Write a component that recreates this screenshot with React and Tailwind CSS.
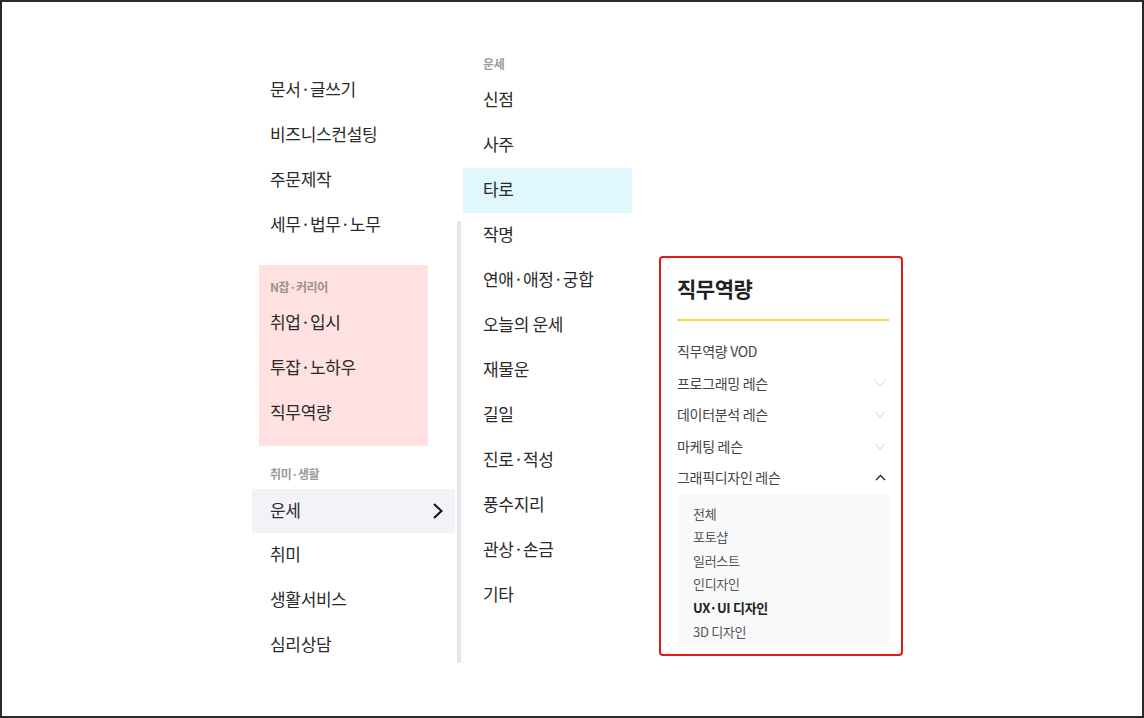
import React from "react";

const font = { fontFamily: '"Noto Sans CJK KR", "Noto Sans", sans-serif' };

function Row({ children, className = "" }) {
  return (
    <div className={"h-[45px] flex items-center pb-[3px] text-[17px] tracking-[-0.3px] text-[#2a2a2a] " + className}>
      {children}
    </div>
  );
}

function Label({ children, className = "" }) {
  return (
    <div className={"h-[18px] flex items-center text-[12px] font-bold tracking-[-0.4px] text-[#9b9b9b] " + className}>
      {children}
    </div>
  );
}

function ChevDown() {
  return (
    <svg width="12" height="7" viewBox="0 0 12 7" fill="none">
      <polyline points="1,1 6,6 11,1" stroke="#cfcfcf" strokeWidth="1" />
    </svg>
  );
}

function ChevUp() {
  return (
    <svg width="11" height="7" viewBox="0 0 11 7" fill="none">
      <polyline points="1,6 5.5,1.5 10,6" stroke="#222" strokeWidth="1.4" />
    </svg>
  );
}

export default function App() {
  const left1 = ["문서·글쓰기", "비즈니스컨설팅", "주문제작", "세무·법무·노무"];
  const pink = ["취업·입시", "투잡·노하우", "직무역량"];
  const left2 = ["취미", "생활서비스", "심리상담"];
  const mid = ["신점", "사주", "타로", "작명", "연애·애정·궁합", "오늘의 운세", "재물운", "길일", "진로·적성", "풍수지리", "관상·손금", "기타"];
  const lessons = ["프로그래밍 레슨", "데이터분석 레슨", "마케팅 레슨"];
  const sub = ["전체", "포토샵", "일러스트", "인디자인", "UX·UI 디자인", "3D 디자인"];

  return (
    <div style={font} className="w-[1144px] h-[718px] border-2 border-[#2a2a2a] bg-white flex items-start pl-[250px] overflow-hidden">
      {/* left column */}
      <div className="w-[203px] mt-[66px] flex flex-col">
        {left1.map((t) => (
          <Row key={t} className="px-[18px]">{t}</Row>
        ))}
        <div className="mt-[17px] ml-[7px] w-[169px] bg-[#ffe1e1] pt-[13px] pb-[10px]">
          <Label className="pl-[11px] text-[#a09090]">N잡·커리어</Label>
          <div className="mt-[5px]">
            {pink.map((t) => (
              <Row key={t} className="pl-[11px]">{t}</Row>
            ))}
          </div>
        </div>
        <Label className="mt-[19px] px-[18px]">취미·생활</Label>
        <div className="mt-[6px] h-[44px] bg-[#f2f3f7] flex items-center justify-between pl-[18px] pr-[11px] text-[17px] tracking-[-0.3px] text-[#2a2a2a]">
          <span className="pb-[3px]">운세</span>
          <svg width="12" height="18" viewBox="0 0 12 18" fill="none">
            <polyline points="2,2 9.5,9 2,16" stroke="#111" strokeWidth="2" />
          </svg>
        </div>
        {left2.map((t) => (
          <Row key={t} className="px-[18px]">{t}</Row>
        ))}
      </div>

      {/* scrollbar */}
      <div className="ml-[2px] mt-[219px] w-[4px] h-[442px] bg-[#e4e6ec]" />

      {/* middle column */}
      <div className="ml-[2px] w-[169px] mt-[53px] flex flex-col">
        <Label className="pl-[20px]">운세</Label>
        <div className="mt-[5px]">
          {mid.map((t) => (
            <Row key={t} className={"pl-[20px] " + (t === "타로" ? "bg-[#e0f7fd]" : "")}>{t}</Row>
          ))}
        </div>
      </div>

      {/* card */}
      <div className="ml-[27px] mt-[254px] w-[244px] h-[400px] border-2 border-[#e31919] rounded-[4px] bg-white pl-[16px] pr-[12px] pb-[7px] flex flex-col">
        <div className="pt-[16px] h-[45px] text-[21px] leading-[28px] font-bold tracking-[-0.5px] text-[#222]">직무역량</div>
        <div className="mt-[16px] h-[2px] bg-[#f7d44c]" />
        <div className="mt-[15px] flex flex-col text-[14px] tracking-[-0.3px] text-[#444]">
          <div className="h-[31.5px] flex items-center">직무역량 VOD</div>
          {lessons.map((t) => (
            <div key={t} className="h-[31.5px] flex items-center justify-between pr-[3px]">
              <span>{t}</span>
              <ChevDown />
            </div>
          ))}
          <div className="h-[31.5px] flex items-center justify-between pr-[3px]">
            <span>그래픽디자인 레슨</span>
            <ChevUp />
          </div>
        </div>
        <div className="ml-[1px] bg-[#f8f9fa] pt-[8px] pb-[2px] pl-[15px] flex flex-col text-[13px] tracking-[-0.3px] text-[#555]">
          {sub.map((t) => (
            <div key={t} className={"h-[23.6px] flex items-center " + (t === "UX·UI 디자인" ? "font-bold text-[#222]" : "")}>
              {t}
            </div>
          ))}
        </div>
      </div>
    </div>
  );
}
